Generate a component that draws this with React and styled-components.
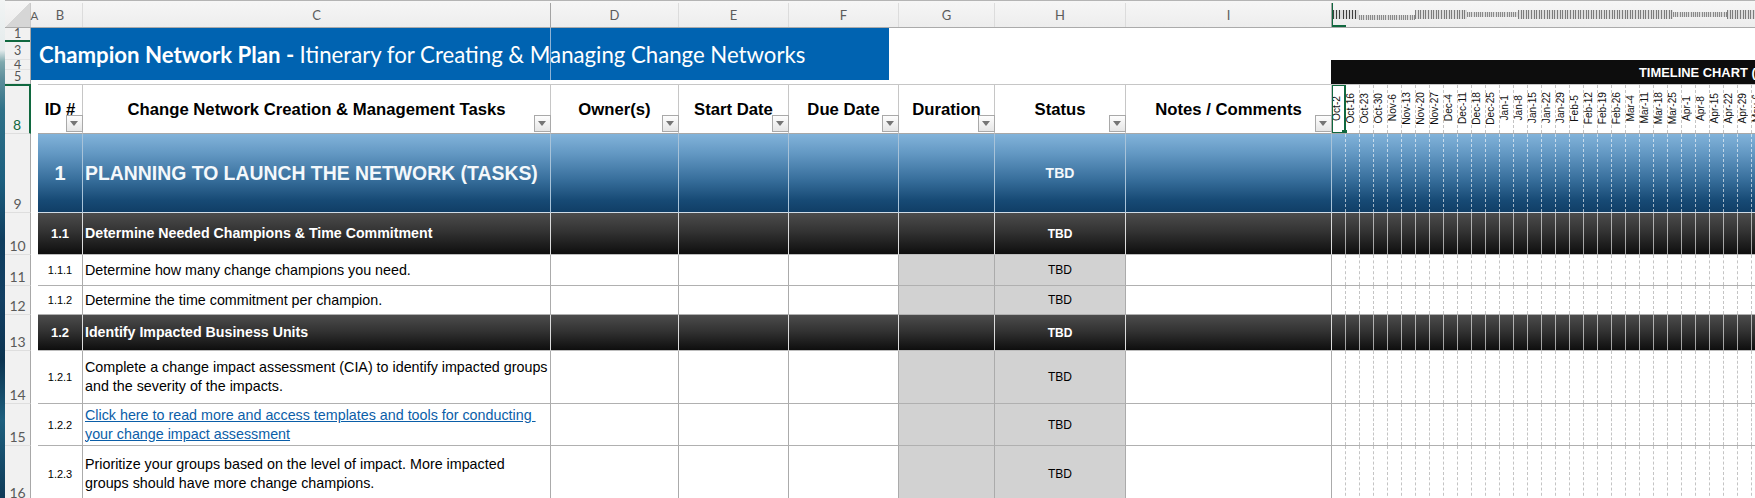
import React from "react";
import styled, { createGlobalStyle, css } from "styled-components";

const Global = createGlobalStyle`
  html, body { margin: 0; padding: 0; background: #fff; overflow: hidden; }
  #root { width: 1755px; height: 498px; }
  * { box-sizing: border-box; }
`;

const columns = css`
  display: grid;
  grid-template-columns: 26px 7px 45px 468px 128px 110px 110px 96px 131px 206px 1fr;
`;

const Page = styled.div`
  display: flex;
  width: 1755px;
  height: 498px;
  overflow: hidden;
  font-family: "Liberation Sans", Arial, sans-serif;
  color: #000;
`;

const Desktop = styled.div`
  flex: 0 0 5px;
  background: linear-gradient(180deg, #f2f4f4 0, #e4ebec 50px, #7fa9ae 62px, #5f8f9c 78px, #2f7188 110px, #1c5f7f 180px, #0f3d5e 240px, #123f63 300px, #0b3350 360px, #1d5f7e 420px, #0e3a58 498px);
`;

const Sheet = styled.div`
  flex: 1;
  min-width: 0;
  display: flex;
  flex-direction: column;
`;

const ColumnHead = styled.div`
  ${columns}
  flex: 0 0 28px;
  padding-top: 2px;
  border-top: 1px solid #b4b4b4;
  border-bottom: 1px solid #ababab;
  background: linear-gradient(180deg, #f6f6f6, #ededed);
`;

const Corner = styled.div`
  border-right: 1px solid #c9c9c9;
  background: linear-gradient(135deg, transparent 50%, #d6d6d6 50%);
`;

const Letter = styled.div`
  display: flex;
  align-items: center;
  justify-content: center;
  font: 13px Lato, "Open Sans", sans-serif;
  color: #5c5c5c;
  border-right: 1px solid ${(p) => (p.$freeze ? "#a3a3a3" : "#dcdcdc")};
`;

const NarrowLetter = styled(Letter)`
  font-size: 11.5px;
  border-right: 0;
`;

const MiniCell = styled.div`
  position: relative;
  display: flex;
  align-items: center;
  padding-left: 1px;
  overflow: hidden;
`;

const Crushed = styled.span`
  flex: 0 0 ${(p) => p.$w}px;
  height: ${(p) => p.$h}px;
  margin-top: ${(p) => p.$top}px;
  background: repeating-linear-gradient(90deg, ${(p) => p.$ink} 0 1px, #dcdcdc 1px ${(p) => p.$pitch}px);
`;

const ColumnMark = styled.span`
  position: absolute;
  left: -1px;
  top: 0;
  width: 15px;
  height: 24px;
  border-left: 2px solid #10683f;
  border-bottom: 2px solid #10683f;
`;

const TitleRow = styled.div`
  ${columns}
  flex: 0 0 56px;
`;

const RowNumbers = styled.div`
  display: flex;
  flex-direction: column;
  background: #f1f1f1;
  border-right: 1px solid #a8a8a8;
`;

const SmallNumber = styled.div`
  flex: 0 0 ${(p) => p.$h}px;
  display: flex;
  align-items: center;
  justify-content: center;
  overflow: hidden;
  font: 12.5px/10px Lato, "Open Sans", sans-serif;
  color: #555;
  border-bottom: ${(p) => (p.$mark ? "2px solid #10683f" : "1px solid #e2e2e2")};
`;

const TitleBand = styled.div`
  grid-column: 2 / span 6;
  position: relative;
  height: 52px;
  margin-right: 10px;
  padding-left: 8px;
  display: flex;
  align-items: center;
  white-space: pre;
  background: #0063b1;
  color: #fff;
  font: 400 22.2px Lato, "Open Sans", sans-serif;
  &::after {
    content: "";
    position: absolute;
    left: 519px;
    top: 0;
    bottom: 0;
    width: 1px;
    background: #8fb4d6;
  }
  b { font-weight: 700; }
`;

const ChartBanner = styled.div`
  grid-column: 11;
  align-self: end;
  height: 24px;
  margin-left: -1px;
  padding-left: 308px;
  display: flex;
  align-items: center;
  overflow: hidden;
  white-space: nowrap;
  background: #0d0d0d;
  color: #fff;
  font-size: 12.9px;
  font-weight: 700;
`;

const Row = styled.div`
  ${columns}
  flex: 0 0 ${(p) => p.$h}px;
`;

const RowNumber = styled.div`
  display: flex;
  align-items: flex-end;
  justify-content: center;
  font: 14px Lato, "Open Sans", sans-serif;
  color: ${(p) => (p.$active ? "#10683f" : "#5a5a5a")};
  background: #f1f1f1;
  border-right: ${(p) => (p.$active ? "2px solid #10683f" : "1px solid #a8a8a8")};
  border-top: ${(p) => (p.$active ? "2px solid #10683f" : "0")};
  border-bottom: 1px solid #dedede;
`;

const Spacer = styled.div`
  background: #fff;
`;

const fills = {
  section: css`
    background: linear-gradient(180deg, #82b3da 0%, #6398c3 25%, #386f9c 58%, #174a75 85%, #103e66 100%);
    color: #f4f8fb;
    border-right: 1px solid #a8c3d9;
    border-bottom: 1px solid #cfdbe5;
  `,
  group: css`
    background: linear-gradient(180deg, #4c4c4c 0%, #333 45%, #0e0e0e 100%);
    color: #fff;
    border-right: 1px solid #dcdcdc;
    border-bottom: 1px solid #bdbdbd;
  `,
  task: css`
    background: #fff;
    border-right: 1px solid #ababab;
    border-bottom: 1px solid #b0b0b0;
  `,
  shaded: css`
    background: #d2d2d2;
    border-right: 1px solid #ababab;
    border-bottom: 1px solid #b0b0b0;
  `,
  head: css`
    background: #fff;
    border-right: 1px solid #c6c6c6;
    border-top: 1px solid #c6c6c6;
    border-bottom: 1px solid #a8a8a8;
  `,
};

const Cell = styled.div`
  position: relative;
  min-width: 0;
  display: flex;
  align-items: center;
  ${(p) => fills[p.$kind]}
`;

const HeadCell = styled(Cell).attrs({ $kind: "head" })`
  justify-content: center;
  padding-top: 1px;
  font-size: 16.7px;
  font-weight: 700;
  white-space: nowrap;
`;

const FilterButton = styled.span`
  position: absolute;
  right: -1px;
  bottom: 1px;
  width: 17px;
  height: 17px;
  border: 1px solid #a9a9a9;
  background: linear-gradient(180deg, #fdfdfd, #e6e6e6);
  &::after {
    content: "";
    position: absolute;
    left: 3px;
    top: 5px;
    border-left: 4.5px solid transparent;
    border-right: 4.5px solid transparent;
    border-top: 5px solid #757575;
  }
`;

const DateCells = styled.div`
  position: relative;
  display: flex;
  overflow: hidden;
  border-top: 1px solid #c6c6c6;
  border-bottom: 1px solid #a8a8a8;
`;

const DateCell = styled.div`
  flex: 0 0 14px;
  display: flex;
  align-items: center;
  justify-content: flex-start;
  padding-bottom: 2px;
  border-right: 1px dashed #c4c4c4;
`;

const DateLabel = styled.span`
  margin-left: -1px;
  writing-mode: vertical-rl;
  transform: rotate(180deg);
  font-size: 10.2px;
  line-height: 11px;
  white-space: nowrap;
  color: #111;
`;

const SelectedDate = styled.span`
  position: absolute;
  left: -1px;
  top: -1px;
  bottom: -1px;
  width: 15px;
  border: 2px solid #10683f;
  &::after {
    content: "";
    position: absolute;
    right: -3px;
    bottom: -3px;
    width: 5px;
    height: 5px;
    background: #10683f;
  }
`;

const IdText = styled.span`
  flex: 1;
  text-align: center;
  font-size: ${(p) => p.$size}px;
  font-weight: ${(p) => (p.$bold ? 700 : 400)};
`;

const TaskText = styled.span`
  padding-left: 2px;
  white-space: nowrap;
  font-size: ${(p) => p.$size}px;
  line-height: 19px;
  font-weight: ${(p) => (p.$bold ? 700 : 400)};
`;

const TaskLink = styled.a`
  color: #0b5ea8;
  text-decoration: underline;
  white-space: pre;
`;

const Status = styled.span`
  flex: 1;
  text-align: center;
  font-size: ${(p) => p.$size}px;
  font-weight: ${(p) => (p.$bold ? 700 : 400)};
`;

const Weeks = styled.div`
  display: flex;
  overflow: hidden;
  min-width: 0;
  ${(p) => (p.$kind === "task" ? css`background: #fff; border-bottom: 1px solid #b0b0b0;` : fills[p.$kind])}
  border-right: 0;
`;

const weekLines = {
  section: "1px dashed rgba(255, 255, 255, 0.6)",
  group: "1px solid rgba(255, 255, 255, 0.6)",
  task: "1px dashed #c4c4c4",
};

const Week = styled.span`
  flex: 0 0 14px;
  border-right: ${(p) => weekLines[p.$kind]};
`;

const DATES = ["Oct-2","Oct-16","Oct-23","Oct-30","Nov-6","Nov-13","Nov-20","Nov-27","Dec-4","Dec-11","Dec-18","Dec-25","Jan-1","Jan-8","Jan-15","Jan-22","Jan-29","Feb-5","Feb-12","Feb-19","Feb-26","Mar-4","Mar-11","Mar-18","Mar-25","Apr-1","Apr-8","Apr-15","Apr-22","Apr-29","May-6"];

const HEADERS = ["ID #", "Change Network Creation & Management Tasks", "Owner(s)", "Start Date", "Due Date", "Duration", "Status", "Notes / Comments"];

const MINI = [
  { w: 26, h: 9, top: -2, ink: "#3f3f3f", pitch: 3.2 },
  { w: 56, h: 5, top: 4, ink: "#8a8a8a", pitch: 2.2 },
  { w: 52, h: 9, top: -2, ink: "#7c7c7c", pitch: 2.6 },
  { w: 51, h: 5, top: -1, ink: "#8a8a8a", pitch: 2.2 },
  { w: 155, h: 9, top: -2, ink: "#7c7c7c", pitch: 2.6 },
  { w: 54, h: 5, top: -1, ink: "#8a8a8a", pitch: 2.2 },
  { w: 40, h: 9, top: -2, ink: "#7c7c7c", pitch: 2.6 },
];

const ROWS = [
  { n: 9, h: 79, kind: "section", id: "1", idSize: 20, text: "PLANNING TO LAUNCH THE NETWORK (TASKS)", size: 19.4, bold: true, statusSize: 14 },
  { n: 10, h: 42, kind: "group", id: "1.1", idSize: 13, text: "Determine Needed Champions & Time Commitment", size: 14.2, bold: true, statusSize: 12 },
  { n: 11, h: 31, kind: "task", id: "1.1.1", idSize: 11, text: "Determine how many change champions you need.", size: 14.3, statusSize: 12 },
  { n: 12, h: 29, kind: "task", id: "1.1.2", idSize: 11, text: "Determine the time commitment per champion.", size: 14.3, statusSize: 12 },
  { n: 13, h: 36, kind: "group", id: "1.2", idSize: 13, text: "Identify Impacted Business Units", size: 14.2, bold: true, statusSize: 12 },
  { n: 14, h: 53, kind: "task", id: "1.2.1", idSize: 11, text: ["Complete a change impact assessment (CIA) to identify impacted groups", "and the severity of the impacts."], size: 14.3, statusSize: 12 },
  { n: 15, h: 42, kind: "task", id: "1.2.2", idSize: 11, link: ["Click here to read more and access templates and tools for conducting ", "your change impact assessment"], size: 14.3, statusSize: 12 },
  { n: 16, h: 56, kind: "task", id: "1.2.3", idSize: 11, text: ["Prioritize your groups based on the level of impact. More impacted", "groups should have more change champions."], size: 14.3, statusSize: 12 },
];

const isBold = (kind) => kind !== "task";

function Lines({ lines }) {
  return [].concat(lines).map((line, i) => (
    <React.Fragment key={i}>
      {i > 0 && <br />}
      {line}
    </React.Fragment>
  ));
}

function PlanRow({ row }) {
  const { kind } = row;
  const shade = kind === "task" ? "shaded" : kind;
  return (
    <Row $h={row.h}>
      <RowNumber>{row.n}</RowNumber>
      <Spacer />
      <Cell $kind={kind}>
        <IdText $size={row.idSize} $bold={isBold(kind)}>{row.id}</IdText>
      </Cell>
      <Cell $kind={kind}>
        <TaskText $size={row.size} $bold={row.bold}>
          {row.link ? <TaskLink href="#"><Lines lines={row.link} /></TaskLink> : <Lines lines={row.text} />}
        </TaskText>
      </Cell>
      <Cell $kind={kind} />
      <Cell $kind={kind} />
      <Cell $kind={kind} />
      <Cell $kind={shade} />
      <Cell $kind={shade}>
        <Status $size={row.statusSize} $bold={isBold(kind)}>TBD</Status>
      </Cell>
      <Cell $kind={kind} />
      <Weeks $kind={kind}>
        {DATES.map((d) => <Week key={d} $kind={kind} />)}
      </Weeks>
    </Row>
  );
}

export default function App() {
  return (
    <Page>
      <Global />
      <Desktop />
      <Sheet>
        <ColumnHead>
          <Corner />
          <NarrowLetter>A</NarrowLetter>
          <Letter>B</Letter>
          <Letter $freeze>C</Letter>
          <Letter>D</Letter>
          <Letter>E</Letter>
          <Letter>F</Letter>
          <Letter>G</Letter>
          <Letter>H</Letter>
          <Letter $freeze>I</Letter>
          <MiniCell>
            <ColumnMark />
            {MINI.map((m, i) => <Crushed key={i} $w={m.w} $h={m.h} $top={m.top} $ink={m.ink} $pitch={m.pitch} />)}
          </MiniCell>
        </ColumnHead>
        <TitleRow>
          <RowNumbers>
            <SmallNumber $h={14} $mark>1</SmallNumber>
            <SmallNumber $h={18}>3</SmallNumber>
            <SmallNumber $h={10}>4</SmallNumber>
            <SmallNumber $h={14}>5</SmallNumber>
          </RowNumbers>
          <TitleBand>
            <b>Champion Network Plan - </b>Itinerary for Creating &amp; Managing Change Networks
          </TitleBand>
          <ChartBanner>TIMELINE CHART (WEEKLY)</ChartBanner>
        </TitleRow>
        <Row $h={50}>
          <RowNumber $active>8</RowNumber>
          <Spacer />
          {HEADERS.map((label) => (
            <HeadCell key={label}>
              {label}
              <FilterButton />
            </HeadCell>
          ))}
          <DateCells>
            {DATES.map((d) => (
              <DateCell key={d}>
                <DateLabel>{d}</DateLabel>
              </DateCell>
            ))}
            <SelectedDate />
          </DateCells>
        </Row>
        {ROWS.map((row) => <PlanRow key={row.n} row={row} />)}
      </Sheet>
    </Page>
  );
}
